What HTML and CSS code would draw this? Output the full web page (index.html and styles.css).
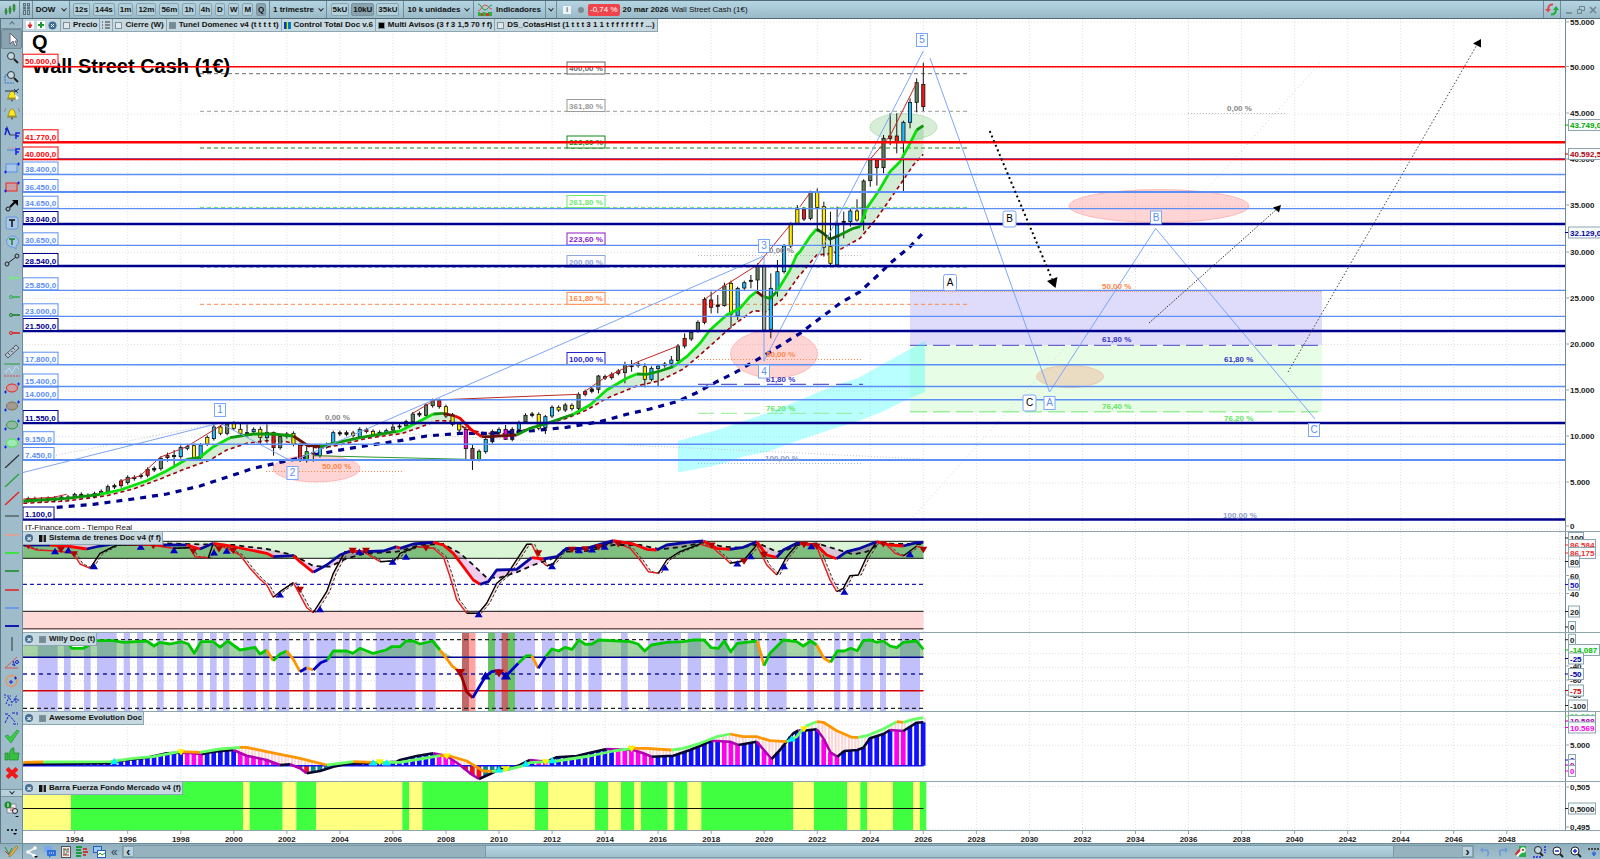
FILE: index.html
```html
<!DOCTYPE html>
<html lang="es">
<head>
<meta charset="utf-8">
<title>DOW - Wall Street Cash (1€)</title>
<link rel="stylesheet" href="styles.css">
</head>
<body>
<header class="topbar">
  <button class="seg seg-candles" aria-label="Tipo de gráfico"><svg width="12" height="12" viewBox="0 0 12 12"><path d="M2 4v7M6 2v8M10 0v8" stroke="#1d5c1d"/><path d="M1 6h2v3H1zM5 4h2v4H5zM9 1h2v5H9z" fill="#35a535" stroke="#1d6c1d" stroke-width=".5"/></svg></button>
  <button class="seg seg-grip" aria-label="Vincular"><svg width="7" height="13" viewBox="0 0 7 13" fill="none" stroke="#5d717b"><rect x=".5" y=".5" width="2" height="2"/><rect x="4.500" y=".5" width="2" height="2"/><rect x=".5" y="4" width="2" height="2"/><rect x="4.500" y="4" width="2" height="2"/><rect x=".5" y="7.500" width="2" height="4"/><rect x="4.500" y="7.500" width="2" height="4"/></svg></button>
  <button class="seg seg-symbol">DOW <i class="chev"></i></button>
  <nav class="seg seg-frames">
    <button class="key">12s</button><button class="key">144s</button><button class="key">1m</button><button class="key">12m</button><button class="key">56m</button><button class="key">1h</button><button class="key">4h</button><button class="key">D</button><button class="key">W</button><button class="key">M</button><button class="key on">Q</button>
  </nav>
  <button class="seg seg-period">1 trimestre <i class="chev"></i></button>
  <nav class="seg seg-units">
    <button class="key">5kU</button><button class="key on">10kU</button><button class="key">35kU</button>
  </nav>
  <button class="seg seg-amount">10 k unidades <i class="chev"></i></button>
  <button class="seg seg-ind"><svg width="14" height="13" viewBox="0 0 14 13" fill="none"><path d="M0 8C3 8 4 2 7 2s4 4 7 4" stroke="#d55050"/><path d="M0 1c3 0 4 6 7 6s4-5 7-5" stroke="#2c9a3a"/><path d="M0 13v-4h2v1h3v-1h2v1h3V9h4v4z" fill="#22b53a"/><path d="M3 10h2v3H3zM8 10h3v3H8z" fill="#d33"/></svg> Indicadores</button>
  <button class="seg seg-more" aria-label="Más indicadores"><i class="chev"></i></button>
  <div class="quote">
    <span class="info">i</span><span class="dot"></span><span class="change">-0,74 %</span><b>20 mar 2026</b><span>Wall Street Cash (1€)</span>
  </div>
  <button class="seg seg-sync" aria-label="Actualizar"><svg width="14" height="13" viewBox="0 0 14 13" fill="none" stroke-width="2"><path d="M8 1.500C5 1 3 3 3 7" stroke="#e04848"/><path d="M0 6h6L3 9.500z" fill="#e04848"/><path d="M6 11.500c4 0 5-2 5-5" stroke="#1fae3a"/><path d="M8 7h6l-3-4z" fill="#1fae3a"/></svg></button>
  <div class="window-keys">
    <button aria-label="Minimizar"><svg width="8" height="8"><path d="M1 7h6" stroke="#6c838e" stroke-width="1.500"/></svg></button>
    <button aria-label="Restaurar"><svg width="8" height="8" fill="none" stroke="#6c838e"><path d="M.5 3.500h4v4h-4zM2.500 3V.5h5v4H5"/></svg></button>
    <button aria-label="Cerrar"><svg width="8" height="8"><path d="M1 1l6 6M7 1L1 7" stroke="#6c838e" stroke-width="1.500"/></svg></button>
  </div>
</header>

<div class="workspace">
  <aside class="tools">
    <button class="fold" aria-label="Subir"><i class="chev up"></i></button>
    <div class="tool-list" id="tools"></div>
    <button class="fold fold-down" aria-label="Bajar"><i class="chev"></i></button>
    <button class="tool-big" aria-label="Plantillas"><svg width="16" height="16" viewBox="0 0 16 16"><path d="M5 3h7v9H3V6" fill="#e8eef0" stroke="#889"/><path d="M6 7h4M6 9h3" stroke="#c44"/><circle cx="4" cy="4" r="3.500" fill="#1b8c2b"/><path d="M4 2v4" stroke="#fff"/><circle cx="11" cy="10" r="2.500" fill="#dde" stroke="#222"/><path d="M11 15h4l-2 1.500z"/></svg></button>
    <button class="tool-dots" aria-label="Más herramientas"><svg width="14" height="10" viewBox="0 0 14 10"><circle cx="3" cy="3" r="1"/><circle cx="7" cy="3" r="1"/><circle cx="11" cy="3" r="1"/><path d="M8 6h4l-2 2z"/></svg></button>
  </aside>

  <main class="charts">
    <section class="panel panel-price" data-panel="price">
      <svg class="plot"></svg><svg class="axis"></svg>
      <div class="tabs">
        <div class="tab tab-actions">
          <button aria-label="Quitar"><svg width="8" height="8"><path d="M0 0h8v8H0z" fill="#fff"/><path d="M4 1v4M2 4h4L4 7z" stroke="#e02020" fill="#e02020"/></svg></button>
          <button aria-label="Añadir"><svg width="8" height="8"><path d="M0 0h8v8H0z" fill="#fff"/><path d="M1 4h6M4 1v6" stroke="#189a28" stroke-width="2"/></svg></button>
          <button aria-label="Cerrar todo"><svg width="9" height="9"><circle cx="4.500" cy="4.500" r="4" fill="#3f6f97"/><path d="M3 3l3 3M6 3L3 6" stroke="#fff"/></svg></button>
        </div>
        <button class="tab"><i class="sw"></i>Precio</button>
        <button class="tab tab-list" aria-label="Lista"><svg width="8" height="8"><path d="M0 1h1M0 4h1M0 7h1M3 1h5M3 4h5M3 7h5" stroke="#333"/></svg></button>
        <button class="tab"><i class="sw"></i>Cierre (W)</button>
        <button class="tab"><i class="sw sw-grey"></i>Tunel Domenec v4 (t t t t t)</button>
        <button class="tab"><i class="sw sw-multi"></i>Control Total Doc v.6</button>
        <button class="tab"><i class="sw sw-black"></i>Multi Avisos (3 f 3 1,5 70 f f)</button>
        <button class="tab"><i class="sw"></i>DS_CotasHist (1 t t t 3 1 1 t f f f f f f f ...)</button>
      </div>
    </section>
    <section class="panel panel-trains" data-panel="trains">
      <svg class="plot"></svg><svg class="axis"></svg>
      <div class="caption"><button class="x" aria-label="Cerrar">×</button><i class="sw sw-half"></i>Sistema de trenes Doc v4 (f f)</div>
    </section>
    <section class="panel panel-willy" data-panel="willy">
      <svg class="plot"></svg><svg class="axis"></svg>
      <div class="caption"><button class="x" aria-label="Cerrar">×</button><i class="sw sw-grey"></i>Willy Doc (t)</div>
    </section>
    <section class="panel panel-awesome" data-panel="awesome">
      <svg class="plot"></svg><svg class="axis"></svg>
      <div class="caption"><button class="x" aria-label="Cerrar">×</button><i class="sw sw-grey"></i>Awesome Evolution Doc</div>
    </section>
    <section class="panel panel-force" data-panel="force">
      <svg class="plot"></svg><svg class="axis"></svg>
      <div class="caption"><button class="x" aria-label="Cerrar">×</button><i class="sw sw-half"></i>Barra Fuerza Fondo Mercado v4 (f)</div>
    </section>
    <section class="panel panel-years" data-panel="years"><svg class="plot"></svg><svg class="axis"></svg></section>
  </main>
</div>

<footer class="bottombar">
  <button class="cell-pencil" aria-label="Dibujar"><svg width="14" height="13" viewBox="0 0 14 13" fill="none"><path d="M1 2l4 7 3-6" stroke="#2c8a3a"/><path d="M1 6l4 4" stroke="#c33"/><path d="M5 12l1-3 6-8 2 1-6 8z" fill="#f3b23a" stroke="#8a6420" stroke-width=".6"/></svg></button>
  <div class="left-icons">
    <button aria-label="Compartir"><svg width="14" height="12" viewBox="0 0 14 12"><path d="M10 2L3 6l7 4" fill="none" stroke="#f4f8fa" stroke-width="1.500"/><circle cx="10" cy="2" r="1.800" fill="#fff"/><circle cx="3" cy="6" r="1.800" fill="#fff"/><circle cx="9" cy="9.500" r="1.800" fill="#fff"/><path d="M9 10h4l-2 2z"/></svg></button>
    <button aria-label="Chat"><svg width="12" height="12" viewBox="0 0 12 12"><rect width="8" height="6" rx="1" fill="#7aa8ee"/><rect x="3" y="4" width="9" height="6" rx="1" fill="#2e6fe0"/><path d="M5 10v2l2-2z" fill="#2e6fe0"/><path d="M5 7h5" stroke="#fff" stroke-dasharray="1"/></svg></button>
    <button aria-label="Noticias"><svg width="10" height="12" viewBox="0 0 10 12"><rect x=".5" y=".5" width="9" height="11" fill="#eee" stroke="#555"/><path d="M2 3h3M6 3h2M2 6h2M5 6h3M2 9h6" stroke="#b33"/><path d="M2 4h6M2 8h4" stroke="#2a7a3a"/></svg></button>
    <button aria-label="Órdenes"><svg width="12" height="12" viewBox="0 0 12 12"><path d="M0 1h6M0 4h5M0 7h6M0 10h5" stroke="#189c38" stroke-width="2"/><path d="M7 3h4M7 6h5M7 9h3" stroke="#d23838" stroke-width="2"/></svg></button>
    <button aria-label="Ventanas"><svg width="13" height="12" viewBox="0 0 13 12"><rect x=".5" y=".5" width="8" height="6" fill="#9cc4f4" stroke="#245fb8"/><rect x="4.500" y="4.500" width="8" height="7" fill="#fff" stroke="#245fb8"/><path d="M5 9l2-2 2 2 3-2" fill="none" stroke="#2c9a3a"/></svg></button>
    <button class="laquo" aria-label="Contraer">«</button>
  </div>
  <div class="scroll">
    <button class="arrow" aria-label="Izquierda">‹</button>
    <div class="track"><div class="thumb"></div></div>
    <button class="arrow" aria-label="Derecha">›</button>
  </div>
  <div class="right-icons">
    <button aria-label="Deshacer"><svg width="12" height="12" viewBox="0 0 12 12"><path d="M2 4h5c3 0 3 5 1 6" fill="none" stroke="#6b9ad8" stroke-width="1.500"/><path d="M1 4l3-3v6z" fill="#6b9ad8"/></svg></button>
    <button aria-label="Rehacer"><svg width="12" height="12" viewBox="0 0 12 12"><path d="M10 4H5c-3 0-3 5-1 6" fill="none" stroke="#6b9ad8" stroke-width="1.500"/><path d="M11 4L8 1v6z" fill="#6b9ad8"/></svg></button>
    <button aria-label="Ajustes"><svg width="12" height="12" viewBox="0 0 12 12"><rect x="4" width="7" height="11" fill="#28b048"/><path d="M1 9l3-4 4-2" fill="none" stroke="#c33" stroke-width="3"/><path d="M2 10l5-5" stroke="#fff" stroke-width="2"/><circle cx="8" cy="4" r="2" fill="none" stroke="#fff" stroke-width="1.500"/></svg></button>
    <button aria-label="Ajustar zoom"><svg width="13" height="12" viewBox="0 0 13 12"><circle cx="5" cy="4" r="3.500" fill="#c9dbe4" stroke="#222"/><path d="M7 7l3 3" stroke="#222" stroke-width="2"/><path d="M12 0v7M0 11h8" stroke="#1a2ee0" stroke-width="1.500" stroke-dasharray="2 1"/></svg></button>
    <button aria-label="Alejar"><svg width="12" height="12" viewBox="0 0 12 12"><circle cx="5" cy="5" r="4" fill="#fff" stroke="#222"/><path d="M8 8l3 3" stroke="#222" stroke-width="2"/><path d="M3 5h4" stroke="#1a2ee0" stroke-width="1.500"/></svg></button>
    <button aria-label="Acercar"><svg width="12" height="12" viewBox="0 0 12 12"><circle cx="5" cy="5" r="4" fill="#fff" stroke="#222"/><path d="M8 8l3 3" stroke="#222" stroke-width="2"/><path d="M3 5h4M5 3v4" stroke="#1a2ee0" stroke-width="1.500"/></svg></button>
    <button aria-label="Opciones"><svg width="12" height="12" viewBox="0 0 12 12"><path d="M0 3h12" stroke="#222" stroke-width="1.500" stroke-dasharray="2 1"/><path d="M6 5v3M4 7h4L6 10z" stroke="#2e6fe0" fill="#2e6fe0"/></svg></button>
  </div>
</footer>
<script src="script.js"></script>
</body>
</html>
```
FILE: styles.css
```css
* { box-sizing: border-box; }
html, body { height: 100%; margin: 0; }
body {
  display: flex; flex-direction: column; overflow: hidden;
  font: 8px/10px "Liberation Sans", Arial, sans-serif; color: #111; background: #9fbccb;
}
button { font: inherit; color: inherit; background: none; border: 0; padding: 0; margin: 0; display: flex; align-items: center; justify-content: center; }
svg { display: block; }

.topbar {
  display: flex; flex: none; height: 19px; font-weight: bold;
  border-top: 1px solid #4f6977; border-bottom: 1px solid #4f6977;
  background: linear-gradient(#b6d5e2, #9abac8);
}
.seg { display: flex; align-items: center; border-right: 1px solid #6f8b98; flex: none; }
.seg-candles { width: 20px; }
.seg-grip { width: 13px; }
.seg-symbol { width: 37px; gap: 7px; }
.seg-frames { width: 200px; gap: 3px; justify-content: center; }
.seg-period { width: 57px; gap: 5px; }
.seg-units { width: 77px; gap: 2px; justify-content: center; }
.seg-amount { width: 70px; gap: 5px; }
.seg-ind { width: 72px; gap: 4px; }
.seg-more { width: 11px; }
.key { height: 13px; padding: 0 1px; border: 1px solid #86a4b1; border-radius: 2px; background: #b3cfda; }
.key.on { background: #8ba3ae; border-color: #7893a0; }
.chev { width: 4px; height: 4px; border: solid #222; border-width: 0 1px 1px 0; transform: rotate(45deg) translate(-1px, -1px); flex: none; }
.chev.up { transform: rotate(225deg); border-color: #56707d; }
.quote { display: flex; flex: 1; align-items: center; gap: 3px; padding-left: 6px; font-weight: normal; white-space: nowrap; }
.info { width: 8px; height: 8px; line-height: 8px; text-align: center; color: #678; background: #eef3f5; font-weight: bold; }
.dot { width: 6px; height: 6px; border-radius: 3px; background: #7c8c94; margin: 0 1px 0 4px; }
.change { background: #f0444c; color: #fff; border-radius: 2px; padding: 1px 2px; }
.seg-sync { width: 18px; border-left: 1px solid #6f8b98; }
.window-keys { display: flex; gap: 4px; align-items: center; padding: 0 3px 0 4px; }

.workspace { display: flex; flex: 1; min-height: 0; }
.tools { width: 23px; flex: none; display: flex; flex-direction: column; background: #9fbccb; border-left: 1px solid #5d7683; border-right: 1px solid #6f8b98; }
.fold { height: 10px; flex: none; border-bottom: 1px solid #7994a1; }
.fold-down { height: 8px; margin-top: 7px; border-top: 1px solid #7994a1; background: #b6d0dc; }
.tool-list { flex: 1; display: flex; flex-direction: column; min-height: 0; }
.tool { flex: 1; min-height: 0; }
.tool.on { background: #8ba3b0; border: 1px solid #708997; border-radius: 2px; }
.tool-big { height: 24px; flex: none; }
.tool-dots { height: 22px; flex: none; }

.charts { flex: 1; min-width: 0; display: flex; flex-direction: column; background: #fff; }
.panel { position: relative; display: flex; min-height: 0; }
.panel-price { flex: 513 1 0; }
.panel-trains { flex: 101 1 0; }
.panel-willy { flex: 79 1 0; }
.panel-awesome { flex: 70 1 0; }
.panel-force { flex: 49 1 0; }
.panel-years { flex: none; height: 12px; }
.plot { flex: 1; min-width: 0; height: 100%; }
.axis { width: 35px; flex: none; height: 100%; }
.plot text, .axis text { font-family: "Liberation Sans", Arial, sans-serif; font-size: 8px; font-weight: bold; }
.plot .plain { font-weight: normal; }
.plot .heading { font-size: 20px; }
.plot .mark { font-size: 10px; font-weight: normal; }

.tabs, .caption { position: absolute; top: 0; left: 0; display: flex; white-space: nowrap; font-weight: bold; background: #c6d9e1; }
.tabs { height: 13px; border-bottom: 1px solid #8da6b1; }
.tab { gap: 3px; padding: 0 2px; border-right: 1px solid #8da6b1; }
.tab-actions { display: flex; align-items: center; gap: 3px; padding: 0 3px; }
.sw { width: 7px; height: 7px; border: 1px solid #7f929b; background: #dfe9ee; flex: none; }
.sw-grey { background: #748b95; }
.sw-black { background: #000; }
.sw-half { border: 0; background: linear-gradient(90deg, #111 50%, #888 50% 70%, #222 70%); }
.sw-multi { border: 0; background: linear-gradient(90deg, #13c 25%, #0a3 25% 45%, #fd0 45% 60%, #07c 60%); }
.caption { height: 13px; align-items: center; gap: 3px; padding-right: 1px; border: solid #8da6b1; border-width: 0 1px 1px 0; }
.caption .x { width: 8px; height: 8px; line-height: 7px; border-radius: 4px; background: #456f92; color: #fff; margin: 0 3px 0 2px; }

.bottombar { display: flex; flex: none; height: 16px; align-items: stretch; background: linear-gradient(#8fb0bf, #a4c0cd); border-top: 1px solid #6f8b98; }
.cell-pencil { width: 23px; flex: none; border-right: 1px solid #6f8b98; }
.left-icons { display: flex; gap: 5px; padding: 0 4px 0 2px; align-items: center; }
.left-icons .laquo { font-size: 12px; color: #33444c; }
.scroll { flex: 1; display: flex; border: 1px solid #7c98a5; margin: 1px 0; }
.arrow { width: 11px; font-size: 12px; font-weight: bold; background: #b6d0dc; border: 1px solid #8aa5b2; }
.track { flex: 1; background: #96b2bf; display: flex; padding-left: 26%; }
.thumb { width: 93%; margin-right: 7%; background: linear-gradient(#b7d6e3, #9fc0ce); border: solid #7c98a5; border-width: 0 1px; }
.right-icons { display: flex; gap: 6px; padding: 0 0 0 5px; align-items: center; }
```
FILE: script.js
```js
// ---------- drawing tools ----------
const seg = (c, w = 1.5) => `<path d="M1 7h14" stroke="${c}" stroke-width="${w}"/>`;
const ray = c => `<circle cx="7" cy="7" r="1.500" fill="none" stroke="${c}"/><path d="M8 7h8" stroke="${c}" stroke-width="1.500"/>`;
const diag = c => `<path d="M1 14L15 1" stroke="${c}" stroke-width="1.300"/>`;
const oval = (c, f) => `<ellipse cx="8" cy="7" rx="5.500" ry="4" fill="${f}" stroke="${c}"/><path d="M0 11h3M1.500 9.500v3M13 3h3M14.500 1.500v3" stroke="#12e"/>`;
const box = (c, f) => `<rect x="2" y="3" width="11" height="8" fill="${f}" stroke="${c}"/><path d="M0 11h3M1.500 9.500v3M13 3h3M14.500 1.500v3" stroke="#12e"/>`;
const bell = '<path d="M4 10c1-1 1-7 4-7s3 6 4 7z" fill="#ffe81a" stroke="#8a7a10" stroke-width=".7"/><path d="M3 11h10" stroke="#8a7a10"/><circle cx="8" cy="12.500" r="1" fill="#555"/>';
const lens = '<circle cx="7" cy="5" r="3.500" fill="#c4d8e0" stroke="#333"/><path d="M10 8l4 4" stroke="#222" stroke-width="2"/>';
const TOOLS = [
  ['Cursor', '<path d="M6 1v11l3-3 2 5 2-1-2-4h3z" fill="#fff" stroke="#667"/>'],
  ['Zoom', lens],
  ['Zoom área', lens + '<path d="M3 5H1v8h9" fill="none" stroke="#2a6fd8" stroke-dasharray="2 1"/>'],
  ['Alerta', bell + '<path d="M1 3h12M10 4l5-3M10 1l4 4" stroke="#235"/><path d="M11 6l4 4-3 2z" fill="#fff"/>'],
  ['Alarma', bell + '<path d="M2 2L0 6M14 2l2 4" stroke="#888"/>'],
  ['Fibonacci', '<path d="M1 10l2-7 3 7M1 4h3" fill="none" stroke="#12c" stroke-width="1.500"/><path d="M6 10h6" stroke="#444"/><path d="M12 14V8h4M12 11h3" stroke="#12e" fill="none" stroke-width="1.500"/>'],
  ['Fibonacci ext', '<path d="M4 5h9" stroke="#d88" stroke-dasharray="2 1"/><path d="M3 7h9" stroke="#48c"/><path d="M12 12V6h4M12 9h3" stroke="#12e" fill="none" stroke-width="1.500"/>'],
  ['Rectángulo', box('#5b8fe8', '#a9c8e6')],
  ['Rectángulo rojo', box('#e22', '#c8a0a4')],
  ['Flecha', '<circle cx="4" cy="11" r="2" fill="none" stroke="#111"/><path d="M6 9l5-5" stroke="#000" stroke-width="2"/><path d="M8 2h6v6z"/>'],
  ['Texto', '<rect x="2" y="1" width="12" height="12" rx="2" fill="#a9c8e6" stroke="#6b95d8"/><path d="M5 4h6M8 4v7" stroke="#111" stroke-width="1.500"/>'],
  ['Globo', '<path d="M9 12l3 2V11A6 5.500 0 1 0 9 12z" fill="#a9c8e6" stroke="#6b95d8"/><path d="M5 4h6M8 4v6" stroke="#17822a" stroke-width="1.500"/>'],
  ['Segmento', '<circle cx="3" cy="11" r="2" fill="none" stroke="#222"/><circle cx="13" cy="3" r="2" fill="none" stroke="#222"/><path d="M4 10l8-6" stroke="#222"/>'],
  ['Semirrecta lima', ray('#6df56d')], ['Semirrecta verde', ray('#2fae4a')], ['Semirrecta oscura', ray('#177a22')], ['Semirrecta roja', ray('#e01818')],
  ['Regla', '<path d="M1 11L12 1l3 3L4 14z" fill="#b5c9d3" stroke="#556"/><path d="M4 9l2 2M7 7l2 1M9 4l2 2" stroke="#556"/>'],
  ['Onda', '<path d="M0 1h16" stroke="#2c9a3a"/><path d="M1 10l4-5 3 5 4-7 3 3" fill="none" stroke="#c9d8ff"/><path d="M0 13h16" stroke="#d44" stroke-dasharray="2 1"/>'],
  ['Elipse roja', oval('#e22', '#c8a0a4')], ['Elipse marrón', oval('#8a6a4a', '#a39c94')], ['Elipse verde', oval('#2a9a3a', '#92b8a4')], ['Elipse lima', oval('#3cf03c', '#a0e8b8')],
  ['Línea', diag('#333')], ['Línea verde', diag('#2aa03a')], ['Línea roja', diag('#f01818')],
  ['Horizontal', seg('#333', 1)], ['Horizontal salmón', seg('#f59a8a')], ['Horizontal lima', seg('#1bf01b')], ['Horizontal verde', seg('#138a22')],
  ['Horizontal roja', seg('#e02020')], ['Horizontal azul', seg('#5b8ff5')], ['Horizontal marina', seg('#1418b0', 2)],
  ['Vertical', '<path d="M8 0v14" stroke="#333"/>'],
  ['Ángulo', '<path d="M13 1L1 12h13" fill="none" stroke="#e05050"/><path d="M8 8l3 2M9 5l2 5" stroke="#12c"/><circle cx="13" cy="6" r="1.500" fill="none" stroke="#12c"/>'],
  ['Círculo', '<circle cx="7.500" cy="7" r="5.500" fill="none" stroke="#f09050" stroke-width="1.300"/><path d="M5 8h4M7 6v4M10 4h3M11.500 2.500v3" stroke="#12c"/>'],
  ['Elliott', '<path d="M1 2v4M2 12l3-7 3 6 5-8M10 8h5M12 6v5M4 13h4M3 4h4" fill="none" stroke="#12c" stroke-dasharray="2 1"/>'],
  ['Elliott abc', '<path d="M1 12L5 4l6 7M8 2h3M13 1v4M9 13h5M1 3h3" fill="none" stroke="#12c" stroke-dasharray="3 1"/>'],
  ['Validar', '<path d="M1 7l3-1 2 3 7-8 2 1-8 12z" fill="#35d040" stroke="#1a8a28" stroke-width=".6"/>'],
  ['Me gusta', '<path d="M1 6h3v7H1zM5 6l3-5h2v5h5l-1 7H5z" fill="#35c040" stroke="#1a7a28" stroke-width=".6"/>'],
  ['Borrar', '<path d="M3 2.500l10 9M13 2.500l-10 9" stroke="#f01818" stroke-width="4"/>'],
];
document.getElementById('tools').innerHTML = TOOLS.map(([n, s], i) =>
  `<button class="tool${i ? '' : ' on'}" aria-label="${n}"><svg width="16" height="14" viewBox="0 0 16 14">${s}</svg></button>`).join('');

// ---------- geometry ----------
const LEFT = 23, RIGHT = 1565, NOW = 923.5, QUARTER = 6.63;
const BANDS = { price: [19, 532], trains: [532, 633], willy: [633, 712], awesome: [712, 782], force: [782, 831], years: [831, 843] };
const price = v => 529 - v * 9.22 / 1000;
const GREY = '#8fa5ad', BLUE = '#5b8ff5', NAVY = '#00008f', RED = '#ff0000';

let out, X, Y;
const path = (pts, close) => 'M' + pts.map(p => X(p[0]).toFixed(1) + ' ' + Y(p[1]).toFixed(1)).join('L') + (close ? 'Z' : '');
const line = (pts, c, w = 1, dash = '', extra = '') => out.push(`<path d="${path(pts)}" fill="none" stroke="${c}" stroke-width="${w}" stroke-dasharray="${dash}" ${extra}/>`);
const area = (pts, fill, extra = '') => out.push(`<path d="${path(pts, true)}" fill="${fill}" ${extra}/>`);
const rect = (x1, y1, x2, y2, fill, extra = '') => out.push(`<rect x="${X(x1)}" y="${Y(y1)}" width="${X(x2) - X(x1)}" height="${Math.max(0, Y(y2) - Y(y1))}" fill="${fill}" ${extra}/>`);
const text = (x, y, s, c = '#111', cls = '', anchor = 'start') => out.push(`<text x="${X(x)}" y="${Y(y) + 3}" fill="${c}" class="${cls}" text-anchor="${anchor}">${s}</text>`);
const oval2 = (cx, cy, rx, ry, f) => out.push(`<ellipse cx="${X(cx)}" cy="${Y(cy)}" rx="${X(cx + rx) - X(cx)}" ry="${Y(cy + ry) - Y(cy)}" fill="${f}" fill-opacity=".26" stroke="${f}" stroke-opacity=".3"/>`);
const tri = (x, y, up, c, r = 4) => { const a = X(x), b = Y(y), s = up ? -1 : 1; out.push(`<path d="M${a - r} ${b - s * r * .8}h${2 * r}L${a} ${b + s * r * .8}Z" fill="${c}"/>`); };

// Series are stored in thirds of a pixel, in three strips of 1200 units.
const read = (base, strips) => strips.flatMap((s, i) => {
  let tone = '';
  return s.trim().split(/\s+/).flatMap(t => {
    if (/^[a-z]$/i.test(t)) { tone = t; return []; }
    const [x, y] = t.split(',').map(Number);
    return [[(x + i * 1200) / 3, (y + base) / 3, tone]];
  });
});
const carry = pts => { let t = 'g'; return pts.map(p => { if (p[2]) t = p[2]; return [p[0], p[1], t]; }); };
const toned = (pts, tones, w) => {
  let i = 1;
  while (i < pts.length) { let j = i; while (j + 1 < pts.length && pts[j + 1][2] === pts[i][2]) j++; line(pts.slice(i - 1, j + 1), tones[pts[i][2]], w, '', 'stroke-linejoin="round"'); i = j + 1; }
};
const at = (pts, x) => { for (let i = 1; i < pts.length; i++) if (pts[i][0] >= x) { const a = pts[i - 1], b = pts[i]; return a[1] + (b[1] - a[1]) * (x - a[0]) / (b[0] - a[0] || 1); } return pts[pts.length - 1][1]; };

function grid(ys, band) {
  for (let k = 0; k < 29; k++) line([[74.7 + k * 53.04, band[0]], [74.7 + k * 53.04, band[1]]], '#e0e0e0', 1, '1 2');
  ys.forEach(y => line([[LEFT, y], [RIGHT, y]], '#e0e0e0', 1, '1 2'));
}

// ---------- price ----------
const LEVELS = [
  ['50.000,0', 66.7, RED, 1.500], ['41.770,0', 142.3, RED, 2.600], ['40.000,0', 159.5, RED, 1.500], ['38.400,0', 174.5, BLUE, 1.300], ['36.450,0', 192, BLUE, 1.800],
  ['34.650,0', 208.7, BLUE, 1.300], ['33.040,0', 224, NAVY, 2.400], ['30.650,0', 245.3, BLUE, 1.300], ['28.540,0', 266, NAVY, 2.400], ['25.850,0', 290.3, BLUE, 1.300],
  ['23.000,0', 316.3, BLUE, 1.300], ['21.500,0', 331, NAVY, 2.400], ['17.800,0', 364.7, BLUE, 1.500], ['15.400,0', 386.5, BLUE, 1.300], ['14.000,0', 399.7, BLUE, 1.500],
  ['11.550,0', 423, NAVY, 2.400], ['9.150,0', 444.2, BLUE, 1.500], ['7.450,0', 460, BLUE, 1.800], ['1.100,0', 519.5, NAVY, 2.400]];
const FIB = [
  ['400,00 %', 68, 73.7, '#6b6b6b'], ['361,80 %', 105.5, 111.3, '#9a9a9a'], ['323,60 %', 142, 148, '#128a12'], ['261,80 %', 201.5, 207.5, '#6fe86f'],
  ['223,60 %', 239, 0, '#8a1ac8'], ['200,00 %', 261.5, 267.3, '#8fa6dc'], ['161,80 %', 298.3, 304.3, '#ff8748'], ['100,00 %', 358.5, 0, '#2222cc']];

// top, bottom, tone, [high, low]
const CANDLES = `626,632,k 626,631,k 627,632,k 625,630,k 624,630,k 621,627,k 621,625,k 613,620,g,608,624 613,617,k 616,620,k 611,619,g 604,610,g 590,605,g 587,591,k 573,587,r 562,578,g 562,566,k 556,560,k 538,556,r 535,540,k 505,536,g 497,503,r,488,515 496,500,k,480,527 472,500,c 470,475,c 467,505,y 465,502,c 442,462,y 411,446,c 411,430,y 402,430,g 400,415,y 418,430,y,400,435 428,432,k,403,440 418,425,c 418,442,y,410,463 427,443,c,403,460 427,473,r,425,497 440,473,g 432,440,c 430,463,y 465,510,r 485,508,l,470,518 487,492,r,470,515 468,497,c 464,470,k 428,460,c 428,432,k 428,433,k 429,437,y 418,440,c 419,424,r 424,433,y 427,433,c 422,427,c 411,420,g,402,427 408,411,k
395,408,g 372,395,g 370,375,k 345,376,g 332,347,g 332,350,r 350,378,y 375,403,y 402,420,y 418,476,m,410,508 475,508,n,465,540 484,508,l 448,485,c 425,455,b 418,428,c 418,448,m,405,450 418,448,b 398,418,c 376,395,g 372,376,k 373,415,y 380,413,c,375,432 352,378,c 352,360,y 345,360,g 346,356,y 313,355,g 305,313,r 297,304,k 258,298,g,255,310 260,264,r 253,263,r 243,250,r 225,248,g,215,280 227,230,k,210,245 222,227,r 230,268,y,220,292 235,268,c 228,236,c,225,288 222,227,c 210,220,c,198,230 168,212,g 145,168,r,130,175 127,147,g 97,122,g 28,97,r 30,52,r,5,70 45,49,k,15,70 -12,47,g,-22,50 -20,72,y,-28,115 -5,77,c,-10,90 -22,-6,c -29,-26,k,-45,-5 -73,-30,g,-80,0 -70,118,o,-75,125 -5,118,c,-50,145 -55,0,c,-90,20 -132,-55,c -197,-132,y -242,-200,y,-255,-195
-242,-213,r -292,-215,g -293,-248,y,-305,-175 -250,-128,y,-265,-100 -130,-80,y,-235,-75 -195,-75,c,-250,-70 -206,-203,k,-235,-155 -237,-205,c,-243,-190 -237,-210,y,-272,-205 -327,-215,g,-332,-178 -390,-328,g,-395,-310 -390,-367,r,-395,-313 -455,-367,g,-465,-350 -462,-455,r,-530,-435 -462,-445,r,-530,-410 -503,-445,c,-508,-295 -563,-503,c,-575,-485 -622,-563,g,-635,-533 -617,-550,r,-682,-537`.split(/\s+/).map(t => t.split(','));
const BODY = { g: '#5d7f5f', y: '#ffee00', c: '#22bbff', r: '#f01818', m: '#ff00e6', b: '#1111a0', l: '#2fd02f', o: '#a8b060', n: '#8a4a5a', k: '#111' };

const FAST = carry(read(870, [
  'd 70,633 200,625 300,613 b 360,600 440,572 500,542 560,508 d 600,502 b 640,470 690,443 d 760,432 820,432 880,438 m 920,465 960,470 d 1000,460 1080,443 1190,424',
  'b 0,423 60,393 100,372 d 130,370 m 165,378 r 180,385 215,420 245,440 m 270,440 350,435 d 390,415 450,397 520,373 b 570,345 620,300 680,265 710,252 d 740,253 780,243 820,230 b 860,200 900,160 930,120 980,75 1020,55 1050,20 1070,5 m 1090,20 d 1110,25 1130,5 b 1170,-60 1190,-105',
  'b 0,-115 30,-160 50,-183 k 70,-170 90,-152 120,-165 d 160,-185 180,-190 b 200,-245 235,-295 270,-355 300,-385 330,-440 350,-480 d 370,-493']));
const SLOW = read(870, [
  '70,640 200,633 320,617 400,597 480,567 560,535 630,510 680,480 740,460 800,452 860,455 900,465 960,475 1020,465 1100,445 1195,432',
  '0,432 60,412 110,392 160,393 200,418 260,430 330,432 400,412 500,385 560,360 620,325 710,288 780,272 850,237 900,195 950,150 1000,105 1060,62 1100,65 1150,25 1195,-40',
  '0,-45 50,-105 100,-110 180,-155 230,-215 300,-315 340,-375 370,-407']);
const LONG = read(870, [
  '170,652 280,643 400,627 500,612 600,588 700,555 760,535 850,515 950,493 1050,475 1190,453',
  '0,452 80,438 180,430 270,430 400,422 500,412 600,395 680,373 750,357 830,335 890,308 950,275 1010,245 1100,192 1190,136',
  '0,130 60,85 120,40 180,5 240,-50 270,-80 330,-130 370,-172']);

function drawPrice() {
  grid([55, 50, 45, 40, 35, 30, 25, 20, 15, 10, 5, 0].map(v => price(v * 1000)), BANDS.price);
  text(32, 46, 'Q', '#000', 'heading'); text(32, 70, 'Wall Street Cash (1€)', '#000', 'heading');
  rect(910, 291, 1322, 345.3, '#dedcfa'); rect(910, 345.3, 1322, 412, '#e8fde6');
  line([[910, 291.5], [1322, 291.5]], '#f09a80', 1, '1 1');
  line([[910, 345.3], [1322, 345.3]], '#6a66d0', 1.300, '17 6');
  line([[910, 411.7], [1322, 411.7]], '#9af09a', 1.500, '17 6');
  area([[678, 441], [717, 430], [747, 420], [767, 413], [800, 400], [820, 391.5], [850, 380.5], [858, 378], [883, 364], [925, 341], [925, 392], [910, 398], [883, 411.5], [860, 420.5], [820, 433], [800, 440], [767, 452], [743, 456.5], [727, 462.5], [710, 466.5], [678, 472.5]], '#00ffff', 'fill-opacity=".27"');
  oval2(903.5, 127, 33.5, 13.5, '#5fb85f'); oval2(1159, 206, 90, 16.5, '#ff5a5a'); oval2(774, 354, 43.5, 24, '#ff5a5a'); oval2(316.5, 468.5, 43.5, 13.5, '#ff5a5a'); oval2(1070, 376.5, 33.5, 11, '#f08060');
  line([[913, 517], [1321, 62]], '#cfcfcf', 1, '1 3');
  line([[53, 456], [219, 423], [517, 440], [800, 453], [923, 459]], '#c4c4c4', 1, '1 2');

  FIB.forEach(f => { if (f[2]) line([[200, f[2]], [970, f[2]]], f[3], 1, '4 3'); });
  [[1188, 1287, 113.5, '#bbb', '1 2'], [698, 863, 255.5, '#bbb', '1 2'], [698, 863, 359.5, '#ff8748', '1 2'], [698, 863, 384.3, '#3535c0', '16 7'], [698, 863, 413.3, '#90ee90', '16 7'], [698, 863, 463.5, '#a8b8dc', '1 2'], [266, 404, 471.5, '#ff8748', '1 2']]
    .forEach(l => line([[l[0], l[2]], [l[1], l[2]]], l[3], 1, l[4]));

  area(FAST.concat(SLOW.slice().reverse()), '#70c070', 'fill-opacity=".3"');
  line(SLOW, '#a00010', 1.600, '4 3');
  line(LONG, NAVY, 3.200, '6 6');
  CANDLES.forEach((c, i) => {
    const x = X(923.3 - (CANDLES.length - 1 - i) * QUARTER), t = (+c[0] + 870) / 3, b = (+c[1] + 870) / 3;
    const hi = c[3] ? (+c[3] + 870) / 3 : t - 2, lo = c[4] ? (+c[4] + 870) / 3 : b + 2;
    out.push(`<path d="M${x} ${Y(hi)}V${Y(lo)}" stroke="#111"/><rect x="${x - 1.6}" y="${Y(t)}" width="3.200" height="${Y(b) - Y(t)}" fill="${BODY[c[2]]}" stroke="#111" stroke-width=".8"/>`);
  });
  toned(FAST, { d: '#0c960c', b: '#08e208', m: '#6a1008', r: '#f00000', k: '#164a10' }, 2.800);
  ['70,627 160,622 200,613', '360,573 420,558 480,502 560,470 670,402', '1238,370 1305,330 1737,313', '1756,303 1814,263 1914,215 2034,168', '2114,28 2155,-1 2272,-75 2372,-197', '2400,-250 2430,-292', '2610,-392 2670,-462 2750,-622']
    .forEach(s => line(read(870, [s]), '#c02828', 1));
  line([[313, 455.7], [466, 459.3]], '#2c9a2c', 1);
  const W = '#7da6f8';
  line([[23, 472.5], [220, 423], [292, 461.5], [764, 256], [764, 361], [923.3, 51]], W, 1);
  line([[930, 58], [1049.5, 392], [1155.7, 228.5], [1315, 419]], W, 1);

  line([[LEFT, 158.5], [RIGHT, 158.5]], '#6a6ac8', 1);
  FIB.forEach(f => { rect(567, f[1] - 6, 605, f[1] + 6, '#fff', `stroke="${f[3]}"`); text(586, f[1], f[0], f[3], '', 'middle'); });
  LEVELS.forEach(l => line([[LEFT, l[1]], [RIGHT, l[1]]], l[2], l[3]));
  LEVELS.forEach(l => { const w = l[0].length > 7 ? 58 : 54; rect(LEFT, l[1] - 12.5, w, l[1] - .5, '#fff', `stroke="${l[2]}"`); text(25, l[1] - 5.3, l[0], l[2]); });

  line([[989.7, 131], [1052, 279]], '#000', 2, '2 3'); area([[1047, 281], [1057.500, 277], [1055.500, 288]], '#000');
  line([[1149, 323], [1277, 209]], '#333', 1, '1.500 1.500'); area([[1273, 207.500], [1281, 205], [1279, 212.500]], '#000');
  line([[1288, 372], [1478, 43]], '#444', 1, '1.500 2'); area([[1473, 43.500], [1481, 39], [1481, 47.500]], '#000');

  [[1227, 107.5, '0,00 %', '#888'], [1102, 285.7, '50,00 %', '#ff8748'], [1102, 339.3, '61,80 %', '#3535c8'], [1102, 406, '76,40 %', '#5ce65c'], [1224, 358.7, '61,80 %', '#3535c8'], [1224, 418, '76,20 %', '#5ce65c'], [1223, 514.7, '100,00 %', '#8f9fcc'],
   [769, 250, '0,00 %', '#888'], [766, 353.5, '50,00 %', '#ff8748'], [766, 378.7, '61,80 %', '#3535c8'], [766, 408, '76,20 %', '#5ce65c'], [765, 458, '100,00 %', '#8f9fcc'], [325, 417, '0,00 %', '#888'], [322, 465.5, '50,00 %', '#ff8748']]
    .forEach(t => text(t[0], t[1], t[2], t[3]));
  [['5', 922, 40], ['1', 220, 410], ['2', 292.5, 473], ['3', 764, 246], ['4', 764, 371.5], ['B', 1156, 217.5], ['A', 1049.5, 403], ['C', 1314, 430]]
    .forEach(m => { rect(m[1] - 5.5, m[2] - 6.5, m[1] + 5.5, m[2] + 6.5, '#fff', `stroke="${W}"`); text(m[1], m[2], m[0], BLUE, 'mark', 'middle'); });
  [['B', 1009.500, 219], ['A', 950, 282.5], ['C', 1029.500, 403]]
    .forEach(m => { rect(m[1] - 6.5, m[2] - 8, m[1] + 6.5, m[2] + 8, '#fff', `rx="2" stroke="${W}"`); text(m[1], m[2], m[0], '#000', 'mark', 'middle'); });
  text(25, 526.5, 'IT-Finance.com - Tiempo Real', '#111', 'plain');
}

// ---------- trains ----------
const THICK = read(870, [
  '70,765 150,765 200,768 260,777 300,768 350,760 490,765 560,765 600,777 640,760 690,768 750,780 800,790 820,800 880,797 900,815 940,847 980,825 1020,795 1050,783 1090,785 1150,783 1190,770',
  '0,775 40,762 100,757 130,765 160,790 190,830 220,870 240,883 265,875 290,840 350,838 395,803 430,807 470,800 500,775 560,775 600,763 640,752 700,762 740,778 770,780 800,765 860,757 910,753 950,775 990,778 1030,772 1070,755 1100,795 1130,802 1150,780 1190,760',
  '0,760 50,765 80,795 110,806 140,785 180,775 230,755 270,765 310,768 350,758 370,757']);
const LAG = read(870, [
  '70,762 490,760 600,763 700,765 800,777 880,795 940,828 990,830 1040,805 1100,790 1190,785',
  '0,783 60,765 130,762 180,790 220,825 260,863 300,863 350,847 400,825 450,808 500,785 560,783 640,765 720,765 780,778 850,770 910,757 970,770 1020,773 1080,762 1130,785 1160,780 1190,766',
  '0,764 50,760 100,775 160,793 200,785 240,760 300,762 370,762']);
const QUICK = read(870, [
  '70,765 110,780 170,783 220,790 240,822 270,835 300,790 350,765 450,765 520,775 570,773 585,800 625,803 640,760 680,775 720,795 750,835 780,868 800,885 820,922 840,905 880,878 920,953 940,968 980,905 1000,850 1035,785 1090,785 1140,815 1180,812 1195,800',
  '0,790 50,770 100,775 130,800 150,860 170,930 200,970 235,970 260,940 290,880 320,855 380,763 395,763 415,805 440,828 460,820 490,780 550,775 600,770 640,755 690,775 720,810 745,845 775,850 800,810 840,785 900,762 940,775 975,805 990,820 1030,812 1070,765 1100,825 1130,855 1160,800 1190,765',
  '0,760 50,770 70,820 90,870 110,905 130,895 150,857 175,855 200,800 230,755 260,765 285,790 310,798 350,768 370,775']);
const UPS = read(870, ['165,783 205,780 282,828 422,770 522,780 642,787 680,782 840,913 960,957 1078,785 1178,815', '18,800 236,972 456,828 537,780 576,778 614,770 795,832 1012,820 1052,798 1152,828', '34,768 133,905 330,792']);
const DOWNS = read(870, ['85,768 183,780 222,793 460,768 580,785 657,778 700,783 900,900 1058,783 1098,783', '78,775 415,790 516,780 556,778 596,772 655,763 935,767 1032,815 1092,795', '12,765 50,770 250,763 370,780']);
const slope = (pts, down, up) => pts.map((p, i) => [p[0], p[1], i && p[1] > pts[i - 1][1] ? down : up]);

function drawTrains() {
  grid([558.3, 576, 593.5, 611.3], BANDS.trains);
  rect(LEFT, 541.3, NOW, 558.3, '#d9f5d5'); rect(LEFT, 611.3, NOW, 629, '#fdd9d7');
  area([[LEFT, 558.3]].concat(THICK.map(p => [p[0], Math.min(p[1], 558.3)]), [[NOW, 558.3]]), '#7fbe7f');
  area(THICK.concat(LAG.slice().reverse()), '#d070d8', 'fill-opacity=".35"');
  area(QUICK.concat(QUICK.map(p => [p[0] + 3, p[1]]).reverse()), '#f08080', 'fill-opacity=".3"');
  line([[LEFT, 541.3], [NOW, 541.3]], '#111', 1); line([[LEFT, 558.3], [NOW, 558.3]], '#111', 1); line([[LEFT, 611.3], [NOW, 611.3]], '#111', 1);
  line([[LEFT, 628.7], [NOW, 628.7]], '#755', 1.500); line([[LEFT, 584.3], [NOW, 584.3]], '#1a1ab8', 1.300, '4 3');
  line(QUICK.map(p => [p[0] + 3, p[1]]).filter(p => p[0] < NOW), '#333', 1, '3 2');
  toned(slope(QUICK, 'r', 'k'), { r: '#e02020', k: '#000' }, 1.400);
  line(LAG, '#111', 1.800, '5 4');
  toned(slope(THICK, 'r', 'b'), { r: '#ff0000', b: '#0808a0' }, 2.800);
  UPS.forEach(p => tri(p[0], p[1], true, '#0000c0')); DOWNS.forEach(p => tri(p[0], p[1], false, '#b00000'));
}

// ---------- willy ----------
const STRIPES = ['113-173 192-212 252-272 291-350 371-390 411-430 471-491 531-550 591-610 630-650 669-688 729-768 789-808 828-868 909-929 949-1008 1029-1049 1067-1085 1127-1200',
  '0-47 67-107 285-305 345-405 426-465 486-504 525-545 565-605 663-683 744-843 863-903 944-983 1002-1041 1062-1080 1101-1160', '22-42 102-121 142-161 181-219 240-258 300-360']
  .flatMap((s, i) => s.split(' ').map(r => r.split('-').map(v => (+v + i * 1200) / 3)));
const WILLY = carry(read(1710, [
  'g 70,212 200,212 215,235 250,235 290,212 340,212 370,217 440,213 462,228 480,217 510,222 545,215 565,222 583,250 603,215 640,215 660,232 683,213 720,240 765,232 780,252 800,240 o 820,272 g 840,252 860,243 o 880,268 900,305 b 920,293 o 940,300 b 962,278 982,270 g 1000,243 1040,243 1058,250 1080,235 1118,250 1158,240 1175,230 1195,230',
  'g 0,230 18,213 40,213 60,222 98,213 120,240 o 158,290 180,305 r 200,365 218,383 b 238,350 256,320 275,305 298,302 318,318 355,280 g 378,258 395,257 o 415,295 b 437,260 g 456,237 476,243 496,232 516,238 537,210 556,223 576,222 596,210 690,215 714,222 734,243 754,225 800,217 850,215 880,210 912,210 934,233 955,235 973,213 992,245 1012,220 1072,213 o 1092,287 g 1110,250 1150,210 1190,215',
  'g 10,228 32,213 50,225 o 72,265 92,277 g 112,243 133,243 152,235 172,242 190,212 210,210 230,217 250,213 270,228 290,233 310,217 350,213 370,238']));
function drawWilly() {
  grid([653.5, 667.3, 680.7, 695], BANDS.willy);
  STRIPES.forEach(s => rect(s[0], 633, s[1], 712, '#c2c0fb'));
  [[462, 469, '#c06868'], [469, 475.5, '#ffa3a3'], [488, 495, '#68c268'], [501.5, 508, '#c06868'], [508, 515, '#68c268']].forEach(s => rect(s[0], 633, s[1], 712, s[2]));
  area([[LEFT, 657.3]].concat(WILLY.map(p => [p[0], Math.min(p[1], 657.3)]), [[NOW, 657.3]]), '#3aa03a', 'fill-opacity=".45"');
  line([[LEFT, 639.7], [NOW, 639.7]], '#222', 1.200, '4 3'); line([[LEFT, 708.3], [NOW, 708.3]], '#222', 1.200, '4 3');
  line([[LEFT, 657.3], [NOW, 657.3]], NAVY, 1.500); line([[LEFT, 674], [NOW, 674]], '#1a1aa0', 1.500, '4 4'); line([[LEFT, 690.7], [NOW, 690.7]], '#d40000', 1.500);
  toned(WILLY, { g: '#00c800', o: '#ff9600', b: '#0000c8', r: '#a00000' }, 2.800);
  tri(460, 673, false, '#b00000', 5); tri(485.5, 675.5, true, '#0000b0', 5); tri(499, 673.5, false, '#b00000', 5); tri(506, 675.5, true, '#0000b0', 5);
}

// ---------- awesome ----------
const AO = read(1710, [
  '70,583 330,580 360,572 440,563 500,550 540,548 580,550 605,553 640,545 700,540 740,557 800,570 840,585 870,583 900,595 920,610 960,603 1000,590 1040,582 1100,580 1190,575',
  '0,570 50,558 100,550 140,558 180,585 210,610 237,627 270,612 300,597 330,597 360,585 390,570 440,575 470,562 530,558 570,548 620,537 700,540 730,550 755,560 820,557 870,540 900,528 935,512 990,515 1015,525 1070,515 1100,550 1115,567 1140,540 1180,490 1195,481',
  '10,482 50,478 70,505 92,548 112,560 133,543 172,540 190,533 210,505 250,492 270,480 310,483 350,458 370,457']);
const ENV = carry(read(1710, [
  'g 70,577 o 130,576 g 330,575 400,565 460,560 540,545 o 600,547 g 660,537 720,532 o 740,532 800,545 900,565 980,585 g 1060,575 o 1120,577 g 1190,577',
  'g 0,577 60,567 120,557 o 150,558 200,573 250,603 275,604 g 300,603 360,590 390,578 470,573 570,558 640,543 700,535 o 740,535 815,540 g 850,535 900,520 950,500 990,492 o 1030,500 1070,500 1110,512 1160,515 g 1190,500',
  'g 0,487 20,467 50,455 o 70,457 110,482 155,502 175,502 g 200,497 250,477 290,455 o 310,457 g 340,448 370,443']));
function drawAwesome() {
  const base = 765.7;
  grid([724.7, 745.3], BANDS.awesome);
  for (let k = 135; k >= 0; k--) {
    const x = 923.3 - k * QUARTER, y = at(AO, x), prev = at(AO, x - QUARTER), e = at(ENV, x), falling = y > prev + .15;
    const c = y <= base ? (falling ? '#ff00f0' : '#1010ff') : (falling ? '#f01020' : '#108888');
    if (e < y) { rect(x - 2.5, e, x - .5, y, falling || e > at(ENV, x - QUARTER) ? '#fbd0d0' : '#d4f8d4'); rect(x + .5, e, x + 2.5, y, '#fbd8d8'); }
    rect(x - 2.5, Math.min(y, base), x + 2.2, Math.max(y, base), c);
  }
  line([[LEFT, base], [NOW, base]], '#1414f0', 1.500);
  toned(slope(AO, 'm', 'k'), { m: '#b000b0', k: '#06062e' }, 2.600);
  toned(ENV, { g: '#66ff66', o: '#ff9600' }, 2.800);
  read(1710, ['343,573 1119,577 1160,577', '297,598 377,580 457,570 1175,505']).forEach(p => tri(p[0], p[1], true, '#00f0ff'));
  read(1710, ['543,547 1139,577', '140,560 317,598 437,577 695,537', '12,478']).forEach(p => tri(p[0], p[1], false, '#fff000'));
}

// ---------- force ----------
const SWITCH = [70, 213, 729, 749, 848, 889, 948, 1207, 1227, 1267, 1464, 1605, 1644, 1785, 1824, 1863, 1902, 1923, 2003, 2023, 2063, 2104, 2380, 2442, 2542, 2581, 2601, 2679, 2739, 2760, 2779];
function drawForce() {
  grid([786.5, 829], BANDS.force);
  for (let i = 1; i < SWITCH.length; i++) rect(SWITCH[i - 1] / 3, 782, SWITCH[i] / 3, 831, i % 2 ? '#ffff80' : '#40ff40');
  line([[LEFT, 808.5], [NOW, 808.5]], '#111', 1);
}

function drawYears() {
  for (let y = 1994, x = 74.7; y <= 2048; y += 2, x += 53.04) { line([[x, 831], [x, 834]], GREY, 1); text(x, 838.5, y, '#222', 'year', 'middle'); }
}

// y, label, colour, boxed
const AXES = {
  price: [[22, '55.000'], [66.5, '50.000'], [113, '45.000'], [159, '40.000'], [205, '35.000'], [252, '30.000'], [298, '25.000'], [344, '20.000'], [390, '15.000'], [436, '10.000'], [482, '5.000'], [526, '0'], [125, '43.749,0', '#00a800', 1], [154, '40.592,5', '#b00010', 1], [232.5, '32.129,0', '#0000a0', 1]],
  trains: [[575.5, '60'], [593.5, '40'], [538, '100', '#222', 1], [545, '86,584', '#f03030', 1], [553, '86,175', '#f03030', 1], [561.5, '80', '#222', 1], [584.5, '50', '#1414c0', 1], [611.5, '20', '#222', 1], [627, '0', '#222', 1]],
  willy: [[666, '-40'], [680, '-60'], [695, '-80'], [639.7, '0', '#222', 1], [650, '-14,087', '#00c000', 1], [658.5, '-25', '#0000a0', 1], [674, '-50', '#0000a0', 1], [690.5, '-75', '#d00000', 1], [705.5, '-100', '#222', 1]],
  awesome: [[745, '5.000'], [716, '11.094', '#50e850', 1], [721, '10.588', '#b000b0', 1], [727.5, '10.569', '#ff00f0', 1], [760, '0', '#1414f0', 1], [765, '0', '#b000b0', 1], [771, '0', '#ff00f0', 1]],
  force: [[787, '0,505'], [827, '0,495'], [808.5, '0,5000', '#222', 1]],
  years: []
};
const DRAW = { price: drawPrice, trains: drawTrains, willy: drawWilly, awesome: drawAwesome, force: drawForce, years: drawYears };

function render() {
  document.querySelectorAll('.panel').forEach(panel => {
    const name = panel.dataset.panel, [top, bottom] = BANDS[name];
    const plot = panel.querySelector('.plot'), axis = panel.querySelector('.axis');
    const box = plot.getBoundingClientRect();
    X = v => (v - LEFT) * box.width / (RIGHT - LEFT);
    Y = v => (v - top) * box.height / (bottom - top);
    out = [];
    DRAW[name]();
    if (name !== 'years') line([[LEFT, bottom - .5], [RIGHT, bottom - .5]], GREY, 1);
    plot.innerHTML = out.join('');

    out = [];
    X = v => v;
    if (name !== 'years') { line([[.5, top], [.5, bottom]], '#6f8b98', 1); line([[0, bottom - .5], [35, bottom - .5]], GREY, 1); }
    AXES[name].forEach(([y, label, c = '#222', boxed]) => {
      line([[0, y], [4, y]], boxed ? c : GREY, 1);
      if (boxed) rect(3.5, y - 5.5, 3.5 + label.length * 4 + 3, y + 5.5, '#f6fafb', `stroke="${GREY}"`);
      text(5, y, label, c);
    });
    axis.innerHTML = out.join('');
  });
}
render();
addEventListener('resize', render);
```
